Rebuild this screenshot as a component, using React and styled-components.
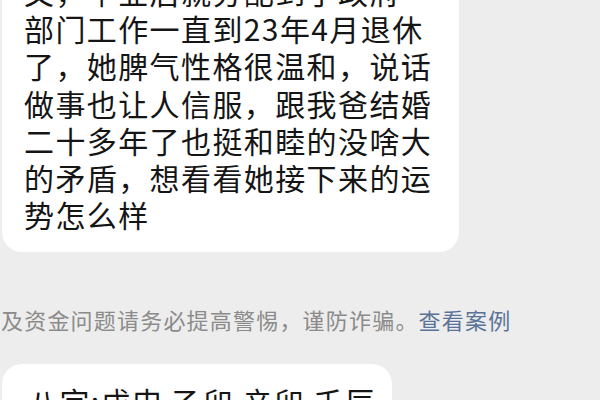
import styled, { createGlobalStyle } from "styled-components";

const GlobalStyle = createGlobalStyle`
  html, body {
    margin: 0;
    padding: 0;
    background: #ededed;
    overflow: hidden;
  }
  body {
    font-family: "Noto Sans CJK SC", "Noto Sans", sans-serif;
  }
`;

const ChatWrapper = styled.section`
  width: 600px;
  height: 400px;
  overflow: hidden;
  background: #ededed;
`;

const Scroller = styled.div`
  display: flex;
  flex-direction: column;
  align-items: flex-start;
  margin-top: -41px;
`;

const Bubble = styled.div`
  box-sizing: border-box;
  width: ${(p) => p.width}px;
  margin-left: 2px;
  margin-top: ${(p) => p.gap || 0}px;
  padding: ${(p) => p.padTop || 14}px 10px ${(p) => p.padBottom || 14}px
    ${(p) => p.padLeft || 22}px;
  background: #ffffff;
  border-radius: 20px;
  color: #151515;
  font-size: 30px;
  letter-spacing: 1.4px;
  line-height: 37.2px;
`;

const Line = styled.div`
  white-space: nowrap;
`;

const Notice = styled.p`
  margin: 52px 0 0 0;
  padding-left: 1px;
  font-size: 22px;
  letter-spacing: 1.2px;
  line-height: 30px;
  color: #8b8b8b;
  white-space: nowrap;

  a {
    color: #5a7398;
    text-decoration: none;
  }
`;

const lines = [
  "文，毕业后就分配到了政府",
  "部门工作一直到23年4月退休",
  "了，她脾气性格很温和，说话",
  "做事也让人信服，跟我爸结婚",
  "二十多年了也挺和睦的没啥大",
  "的矛盾，想看看她接下来的运",
  "势怎么样",
];

const App = () => {
  return (
    <ChatWrapper>
      <GlobalStyle />
      <Scroller>
        <Bubble width={457} padBottom={19}>
          {lines.map((l) => (
            <Line key={l}>{l}</Line>
          ))}
        </Bubble>
        <Notice>
          及资金问题请务必提高警惕，谨防诈骗。<a href="#">查看案例</a>
        </Notice>
        <Bubble width={390} gap={30} padTop={19} padLeft={26}>
          <Line>八字:戊申 乙卯 辛卯 壬辰</Line>
        </Bubble>
      </Scroller>
    </ChatWrapper>
  );
};

export default App;
